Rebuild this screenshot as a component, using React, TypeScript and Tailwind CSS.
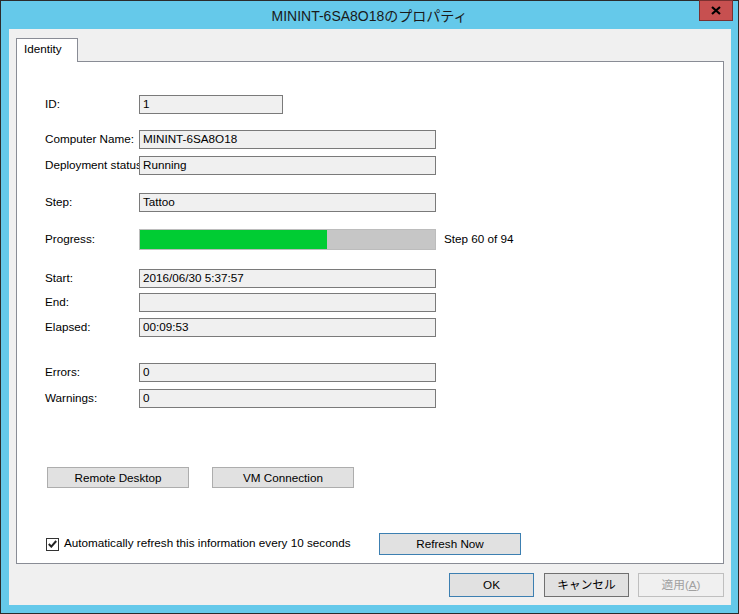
import React from 'react'

const font = { fontFamily: '"Liberation Sans", "Noto Sans CJK JP", sans-serif' }

function Field({ value, width = 'w-[297px]' }: { value: string; width?: string }) {
  return (
    <div
      className={`relative z-10 h-[19px] ${width} border border-[#7a7a7a] bg-[#f0f0f0] pl-[3px] text-[11.7px] leading-[16px] text-black`}
    >
      {value}
    </div>
  )
}

function Row({ label, value, mt, width }: { label: string; value: string; mt: string; width?: string }) {
  return (
    <div className={`flex h-[19px] items-center ${mt}`}>
      <div className="relative -top-px w-[94px] shrink-0 whitespace-nowrap text-[11.7px] leading-[14px] text-black">{label}</div>
      <Field value={value} width={width} />
    </div>
  )
}

function Button({ children, variant = 'normal', className = '' }: { children: React.ReactNode; variant?: 'normal' | 'default' | 'dark' | 'disabled'; className?: string }) {
  const styles = {
    normal: 'border-[#adadad] bg-[#e1e1e1] text-black',
    default: 'border-[#3c7fb1] bg-[#e1e1e1] text-black',
    dark: 'border-[#707070] bg-[#e1e1e1] text-black',
    disabled: 'border-[#bfbfbf] bg-[#f0f0f0] text-[#a0a0a0]',
  }[variant]
  return (
    <button className={`flex items-center justify-center border text-[11.7px] ${styles} ${className}`}>
      {children}
    </button>
  )
}

export default function App() {
  const done = 60
  const total = 94

  return (
    <div className="h-[614px] w-[739px] border border-[#2b2b2b] bg-[#65c9ea]" style={font}>
      {/* Title bar */}
      <div className="relative flex h-[28px] items-center justify-center">
        <span className="mt-[3px] text-[14px] text-[#1a1a1a]">MININT-6SA8O18のプロパティ</span>
        <div className="absolute right-[5px] top-[-1px] flex h-[21px] w-[34px] items-center justify-center border border-[#7a3030] bg-[#c75050]">
          <svg width="10" height="9" viewBox="0 0 10 9">
            <path d="M1 1 L9 8 M9 1 L1 8" stroke="#000" strokeWidth="2.2" />
          </svg>
        </div>
      </div>

      {/* Client area */}
      <div className="ml-[8px] mr-[7px] flex h-[576px] flex-col bg-[#f0f0f0] px-[7px] pt-[9px]">
        {/* Tab */}
        <div className="relative z-10 -mb-px h-[24px] w-[62px] border border-b-0 border-[#898c95] bg-white pl-[7px] pt-[1px] text-[11.7px] text-black">
          Identity
        </div>

        {/* Panel */}
        <div className="flex h-[503px] flex-col border border-[#898c95] bg-white pl-[28px]">
          <Row label="ID:" value="1" mt="mt-[33px]" width="w-[144px]" />
          <Row label="Computer Name:" value="MININT-6SA8O18" mt="mt-[16px]" />
          <Row label="Deployment status" value="Running" mt="mt-[7px]" />
          <Row label="Step:" value="Tattoo" mt="mt-[18px]" />

          <div className="mt-[17px] flex h-[21px] items-center">
            <div className="relative -top-px w-[94px] shrink-0 text-[11.7px] leading-[14px] text-black">Progress:</div>
            <div className="h-[21px] w-[297px] border border-[#bcbcbc] bg-[#c6c6c6]">
              <div className="h-full bg-[#00cc33]" style={{ width: Math.floor((done / total) * 293) }} />
            </div>
            <div className="relative -top-px ml-[8px] text-[11.7px] leading-[14px] text-black">Step {done} of {total}</div>
          </div>

          <Row label="Start:" value="2016/06/30 5:37:57" mt="mt-[19px]" />
          <Row label="End:" value="" mt="mt-[5px]" />
          <Row label="Elapsed:" value="00:09:53" mt="mt-[6px]" />

          <Row label="Errors:" value="0" mt="mt-[26px]" />
          <Row label="Warnings:" value="0" mt="mt-[7px]" />

          <div className="ml-[2px] mt-[59px] flex gap-[23px]">
            <Button className="h-[21px] w-[142px]">Remote Desktop</Button>
            <Button className="h-[21px] w-[142px]">VM Connection</Button>
          </div>

          <div className="mt-[45px] flex h-[22px] items-center">
            <div className="ml-[1px] flex h-[13px] w-[13px] items-center justify-center border border-[#333] bg-white">
              <svg width="9" height="8" viewBox="0 0 9 8">
                <path d="M0.8 4 L3.3 6.6 L8.2 1" fill="none" stroke="#222" strokeWidth="2" />
              </svg>
            </div>
            <span className="relative -top-px ml-[5px] text-[11.7px] leading-[14px] text-black">Automatically refresh this information every 10 seconds</span>
            <Button variant="default" className="ml-auto mr-[202px] h-[22px] w-[142px]">Refresh Now</Button>
          </div>
        </div>

        {/* Dialog buttons */}
        <div className="mt-[9px] flex justify-end gap-[10px]">
          <Button variant="default" className="h-[24px] w-[85px]">OK</Button>
          <Button variant="dark" className="h-[24px] w-[85px]">キャンセル</Button>
          <Button variant="disabled" className="-ml-px h-[24px] w-[86px]">
            <span>
              適用(<span className="underline">A</span>)
            </span>
          </Button>
        </div>
      </div>
    </div>
  )
}
